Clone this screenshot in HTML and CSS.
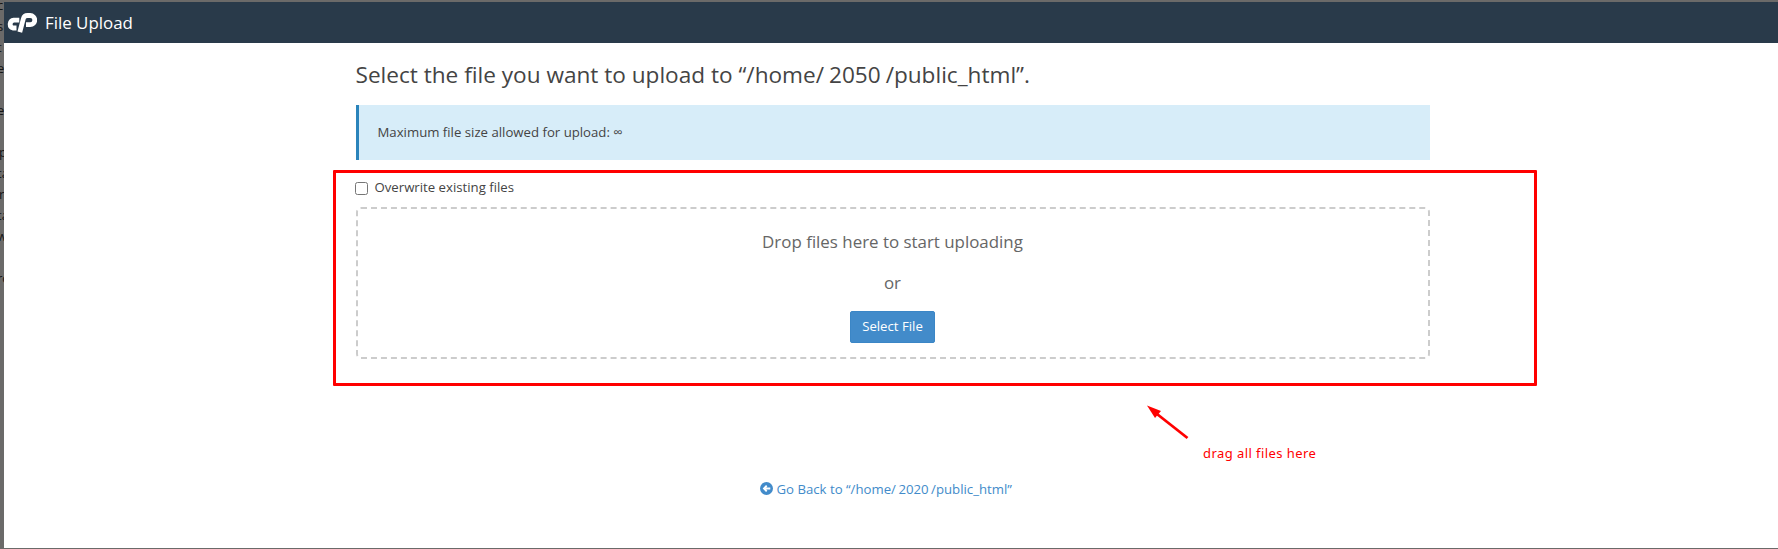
FILE: index.html
```html
<!DOCTYPE html>
<html lang="en">
<head>
<meta charset="utf-8">
<title>File Upload</title>
<link rel="stylesheet" href="styles.css">
</head>
<body>
<div class="backdrop">
  <span style="top:-5px">c</span><span style="top:16px">s</span><span style="top:37px">t</span><span style="top:58px">e</span><span style="top:100px">e</span><span class="edge" style="top:142px">p</span><span style="top:163px">ta</span><span class="edge" style="top:184px">r</span><span style="top:205px">ta</span><span style="top:226px">w</span><span style="top:268px">ro</span>
</div>
<div class="page">
  <header class="topbar">
    <svg class="logo" width="30" height="22" viewBox="0 0 30 22"><path d="M12.3 8.2H6.8a4 4 0 0 0-.8 7.8H9.5M12.8 20.2 16.4 6.5Q17.2 3.5 20.5 3.5H23.2a4.2 4.2 0 0 1 0 9.2H19" fill="none" stroke="#fff" stroke-width="4.8"/></svg>
    <h1 class="brand">File Upload</h1>
  </header>
  <main class="container">
    <h2 class="title"><span>Select the file you want to upload to “/home/</span><span class="num">2050</span><span>/public_html”.</span></h2>
    <div class="alert">Maximum file size allowed for upload: ∞</div>
    <label class="overwrite"><input type="checkbox" class="check"><span>Overwrite existing files</span></label>
    <section class="dropzone">
      <p class="drop">Drop files here to start uploading</p>
      <p class="or">or</p>
      <button class="select">Select File</button>
    </section>
    <a class="back"><svg class="back-icon" width="13" height="13" viewBox="0 0 13 13"><circle cx="6.5" cy="6.5" r="6.5" fill="#428bca"/><path d="M10.3 6.5H4M6.7 3.7 4 6.5l2.7 2.8" fill="none" stroke="#fff" stroke-width="1.9"/></svg><span>Go Back to “/home/</span><span class="back-num">2020</span><span>/public_html”</span></a>
  </main>
</div>
<div class="highlight"></div>
<svg class="arrow" width="44" height="36" viewBox="0 0 44 36"><path d="M11 9 41.5 33" stroke="#f00" stroke-width="2.8"/><path d="M1 .5 15 6 9 13Z" fill="#f00"/></svg>
<div class="note">drag all files here</div>
</body>
</html>
```
FILE: styles.css
```css
* { box-sizing: border-box; }
body {
  margin: 0;
  height: 549px;
  padding: 2px 0 1px 4px;
  overflow: hidden;
  position: relative;
  background: #6b6a69;
  color: #444;
  font-family: "Open Sans", sans-serif;
  font-size: 13.2px;
}
h1, h2, p { margin: 0; font-weight: 400; }
.backdrop {
  position: absolute;
  left: 0;
  top: 0;
  width: 4px;
  height: 549px;
  overflow: hidden;
  color: #151515;
  font: 13px/21px "Open Sans", sans-serif;
}
.backdrop span { position: absolute; left: -3px; }
.backdrop .edge { left: -1px; }
.page { height: 546px; background: #fff; }
.topbar {
  display: flex;
  align-items: center;
  height: 41px;
  padding-left: 3px;
  background: #293a4a;
  color: #fff;
}
.brand { margin-left: 8px; font-size: 16.9px; line-height: 24px; }
.container { width: 1074px; margin-left: 351.5px; display: flex; flex-direction: column; }
.title { display: flex; height: 62px; padding-top: 16px; font-size: 22.6px; line-height: 32px; white-space: nowrap; }
.num { margin: 0 5px; }
.alert {
  height: 55px;
  padding-left: 19px;
  border-left: 3px solid #2a84bb;
  background: #d7edf9;
  line-height: 55px;
}
.overwrite { display: flex; height: 47px; padding-top: 18px; line-height: 18px; }
.check { width: 13px; height: 13px; margin: 4px 6.5px 0 -.5px; }
.dropzone {
  display: flex;
  flex-direction: column;
  align-items: center;
  height: 152px;
  border: 2px dashed #ccc;
  border-radius: 5px;
  color: #666;
  font-size: 16.9px;
  line-height: 24px;
}
.drop { margin-top: 21px; }
.or { margin-top: 17px; }
.select {
  width: 85px;
  height: 32px;
  margin-top: 16px;
  padding: 0 0 2px;
  border: 1px solid #3b86c6;
  border-radius: 2px;
  background: #428bca;
  color: #fff;
  font: 13.2px "Open Sans", sans-serif;
}
.back { display: flex; margin: 120px 0 0 404.5px; color: #428bca; line-height: 20px; white-space: nowrap; }
.back-icon { margin: 3px 3.5px 0 0; }
.back-num { margin: 0 2.5px; }
.highlight {
  position: absolute;
  left: 333px;
  top: 170px;
  width: 1204px;
  height: 216px;
  border: 3px solid #f00;
  border-radius: 1px;
}
.arrow { position: absolute; left: 1146px; top: 405px; }
.note {
  position: absolute;
  left: 1203px;
  top: 443px;
  color: #f00;
  font: 13px/20px "Noto Sans", sans-serif;
  letter-spacing: .43px;
  white-space: nowrap;
}
```
